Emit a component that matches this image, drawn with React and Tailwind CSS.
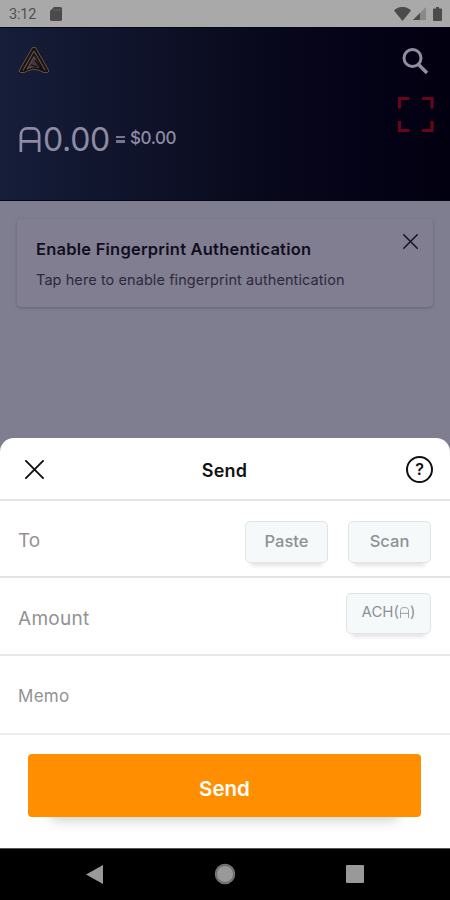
import React from 'react';

function Logo() {
  return (
    <svg width="32" height="28" viewBox="0 0 32 28" fill="none">
      <path d="M14.500 1.500h3L31 25l-1.500 1.500h-4C19 22.500 12.500 22.500 6.500 26.500h-4L1 25z" fill="#151317" stroke="#6f5236" strokeWidth="1" />
      <path d="M16 5L5 24.500M16 5l11 19" stroke="#67503f" strokeWidth="1.200" />
      <path d="M16 10.500L9 23c4-2.500 8.500-2.500 13-1.500L16 10.500z" fill="#43373b" stroke="#725b4f" strokeWidth="0.800" />
      <path d="M17 14l6 9M13 19l6 2" stroke="#0a0910" strokeWidth="1.300" />
    </svg>
  );
}

function CoinSign({ className, strokeWidth }) {
  return (
    <svg className={className} viewBox="0 0 22 26" fill="none" stroke="currentColor" strokeWidth={strokeWidth}>
      <path d="M1.500 26V8.500c0-4 2.500-7 6.500-7h6c4 0 6.500 3 6.500 7V26M1.500 15h19" />
    </svg>
  );
}

function CloseIcon({ className }) {
  return (
    <svg className={className} viewBox="0 0 20 20" fill="none" stroke="currentColor" strokeWidth="2" strokeLinecap="round">
      <path d="M1 1l18 18M19 1L1 19" />
    </svg>
  );
}

function StatusBar() {
  return (
    <div className="flex h-[27px] items-center justify-between bg-[#a9a9a9] pl-[9px] pr-2 text-[#505050]">
      <div className="flex items-center">
        <span className="w-[41px] pt-[2px] font-['Roboto',sans-serif] text-[14.500px] leading-[25px] tracking-[-0.2px]">3:12</span>
        <svg width="12" height="14" viewBox="0 0 12 14">
          <path d="M4 0h6.500Q12 0 12 1.500v11Q12 14 10.500 14h-9Q0 14 0 12.500V4z" fill="#4b4b4b" />
          <path d="M4.500 2v2M7 2v2M9.500 2v2" stroke="#686868" />
        </svg>
      </div>
      <div className="flex items-center">
        <svg width="17" height="14" viewBox="0 0 17 14" fill="#4b4b4b">
          <path d="M0 3.500C4.500-1.200 12.500-1.200 17 3.500L8.500 14z" />
        </svg>
        <svg className="ml-[2px]" width="13" height="13" viewBox="0 0 13 13">
          <path d="M13 0v13H0z" fill="#898989" />
          <path d="M7 6v7H0z" fill="#4b4b4b" />
        </svg>
        <svg className="ml-[7px]" width="9" height="14" viewBox="0 0 9 14" fill="#4b4b4b">
          <path d="M3 0h3v1.500h2q1 0 1 1V13q0 1-1 1H1q-1 0-1-1V2.500q0-1 1-1h2z" />
        </svg>
      </div>
    </div>
  );
}

function Header() {
  return (
    <header className="flex h-[174px] justify-between border-y border-[#060614] bg-gradient-to-r from-[#161e3a] via-[#0b0c20] to-[#020010] pl-[18px] pr-4 text-[#8e8ba3]">
      <div className="flex flex-col pt-[18px]">
        <Logo />
        <div className="mt-[45px] flex h-10 items-center">
          <CoinSign className="mt-px h-[25px] w-[24px]" strokeWidth={2.8} />
          <span className="ml-px mt-[2px] text-[32px] tracking-[-0.3px]">0.00</span>
          <span className="ml-[6px] flex w-[9px] flex-col gap-[2px]">
            <span className="h-[2.500px] bg-[#77748d]" />
            <span className="h-[2.500px] bg-[#77748d]" />
          </span>
          <span className="ml-[5px] text-[17px] font-medium tracking-[-0.4px]">$0.00</span>
        </div>
      </div>
      <div className="flex flex-col items-end pt-5">
        <svg className="mr-[5px]" width="27" height="27" viewBox="0 0 27 27" fill="none" stroke="#918e9f">
          <circle cx="10.500" cy="10" r="8.500" strokeWidth="3" />
          <path d="M16.500 16.500l8.500 8.500" strokeWidth="3.600" />
        </svg>
        <svg className="mt-[21px]" width="37" height="37" viewBox="0 0 37 37" fill="none" stroke="#68051a" strokeWidth="3.200">
          <path d="M2.500 12.500v-10h10M25 2.500h10v10M35 25v9.500H25M12.500 34.500h-10V25" />
        </svg>
      </div>
    </header>
  );
}

function KeyButton({ children, className }) {
  return (
    <button className={`flex items-center justify-center rounded-[5px] border-[1.500px] border-[#e0e4e6] bg-[#f5f9fa] text-[#8e9193] shadow-[0_9px_4px_-6px_rgba(0,0,0,0.11)] ${className}`}>
      {children}
    </button>
  );
}

function SendSheet() {
  return (
    <section className="h-[410px] rounded-t-[14px] bg-white">
      <div className="flex h-[63px] items-center justify-between border-b-2 border-[#e3e3e6] pl-[25px] pr-[17px] pt-px text-[#111]">
        <CloseIcon className="h-[19px] w-[19px]" />
        <h2 className="mr-px mt-[2px] text-[18px] font-semibold tracking-[0.2px]">Send</h2>
        <span className="flex h-[27px] w-[27px] items-center justify-center rounded-full border-2 border-[#111] text-[16px] font-semibold leading-none">
          ?
        </span>
      </div>
      <div className="flex h-[77px] justify-between border-b-2 border-[#e3e3e6] pl-[18px] pr-[19px]">
        <span className="mt-[26px] text-[19px] leading-7 text-[#929292]">To</span>
        <div className="mt-[20px] flex gap-5">
          <KeyButton className="h-[42px] w-[83px] pb-px text-[16.500px] font-medium">Paste</KeyButton>
          <KeyButton className="h-[42px] w-[83px] pb-px text-[16.500px] font-medium">Scan</KeyButton>
        </div>
      </div>
      <div className="flex h-[78px] justify-between border-b-2 border-[#e8e8ea] pl-[18px] pr-[19px]">
        <span className="mt-[27px] text-[19px] leading-7 tracking-[0.3px] text-[#929292]">Amount</span>
        <KeyButton className="mt-[15px] h-[41px] w-[85px] pb-[3px] text-[15px]">
          <span>ACH(</span>
          <CoinSign className="h-[11px] w-[11px]" strokeWidth={2} />
          <span>)</span>
        </KeyButton>
      </div>
      <div className="h-[79px] border-b-2 border-[#eee] pl-[18px] pt-[26px]">
        <span className="text-[17px] leading-7 tracking-[0.3px] text-[#929292]">Memo</span>
      </div>
      <div className="px-7 pt-[19px]">
        <button className="block h-[63px] w-[393px] rounded-[4px] bg-[#ff8f00] pt-[7px] text-[20.500px] font-semibold text-white shadow-[0_26px_14px_-24px_rgba(0,0,0,0.24)]">
          Send
        </button>
      </div>
    </section>
  );
}

function NavBar() {
  return (
    <nav className="flex h-[52px] items-center justify-between border-t border-[#555] bg-black pl-[86px] pr-[86px] text-[#999]">
      <svg className="-mt-px" width="17" height="19" viewBox="0 0 17 19" fill="currentColor">
        <path d="M17 0v19L0 9.500z" />
      </svg>
      <svg className="-mt-px" width="22" height="22" viewBox="0 0 22 22">
        <circle cx="11" cy="11" r="9.500" fill="#999" stroke="#777" strokeWidth="1.500" />
        <circle cx="11" cy="11" r="8.500" fill="none" stroke="#555" strokeWidth="0.700" />
      </svg>
      <span className="-mt-px h-[18px] w-[18px] rounded-[1px] bg-[#999]" />
    </nav>
  );
}

export default function App() {
  return (
    <div className="flex h-[900px] w-[450px] flex-col overflow-hidden bg-[#7f7d90] font-['Inter',sans-serif]">
      <StatusBar />
      <Header />
      <main className="h-[237px] px-[17px] pt-[18px]">
        <div className="flex h-[88px] justify-between rounded-[4px] bg-[#827e91] pl-[19px] pr-[15px] shadow-[0_1px_3px_rgba(60,58,80,0.4)]">
          <div className="pt-[18px]">
            <h1 className="text-[16.500px] font-semibold leading-6 tracking-[0.22px] text-[#120e22]">Enable Fingerprint Authentication</h1>
            <p className="mt-[8px] text-[14.500px] leading-[22px] tracking-[0.08px] text-[#2c293c]">Tap here to enable fingerprint authentication</p>
          </div>
          <CloseIcon className="mt-[15px] h-[15px] w-[15px] text-[#161226]" />
        </div>
      </main>
      <SendSheet />
      <NavBar />
    </div>
  );
}
